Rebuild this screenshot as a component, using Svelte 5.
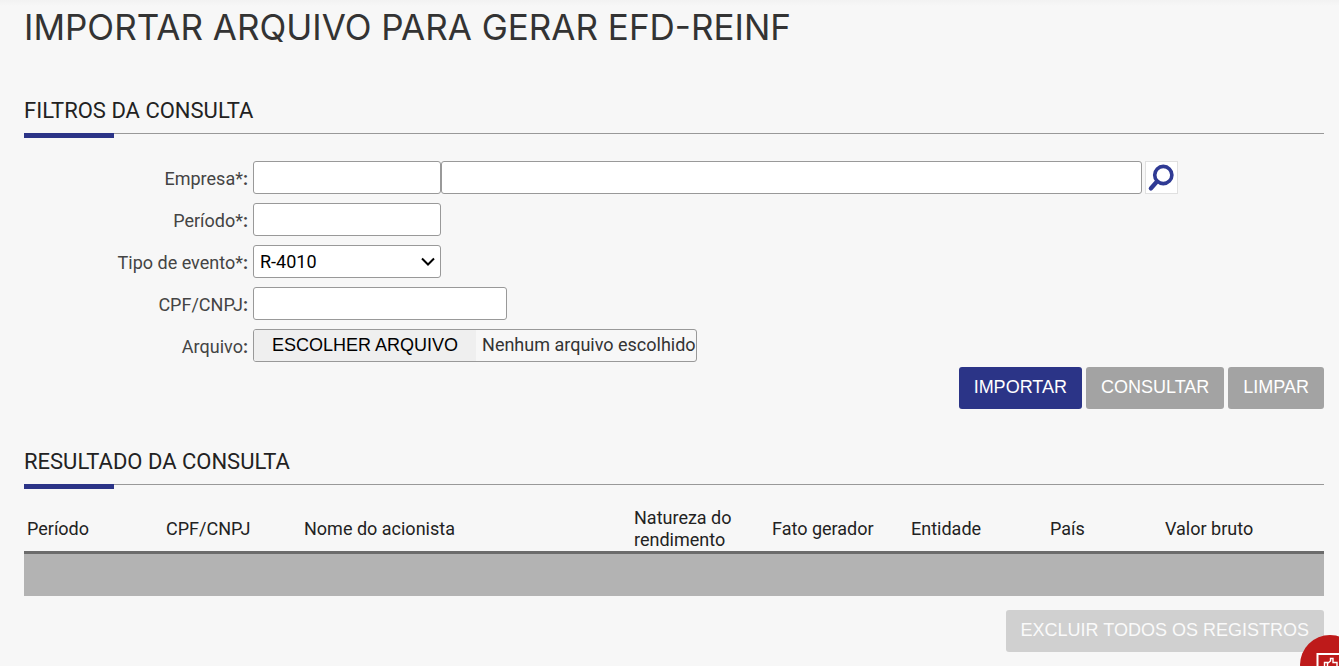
<script lang="ts">
    let empresaCodigo = "";
    let empresaNome = "";
    let periodo = "";
    let tipoEvento = "R-4010";
    let cpfCnpj = "";
    let files: FileList | undefined;

    const colunas = [
        { titulo: "Período", largura: 139 },
        { titulo: "CPF/CNPJ", largura: 138 },
        { titulo: "Nome do acionista", largura: 330 },
        { titulo: "Natureza do rendimento", largura: 138 },
        { titulo: "Fato gerador", largura: 139 },
        { titulo: "Entidade", largura: 139 },
        { titulo: "País", largura: 115 },
        { titulo: "Valor bruto", largura: 162 },
    ];
    const total = colunas.reduce((soma, c) => soma + c.largura, 0);

    $: nomeArquivo = files && files.length ? files[0].name : "Nenhum arquivo escolhido";
</script>

<main>
    <h1>IMPORTAR ARQUIVO PARA GERAR EFD-REINF</h1>

    <section class="filtros">
        <h2>FILTROS DA CONSULTA</h2>
        <form on:submit|preventDefault>
            <div class="linha">
                <label for="empresa">Empresa*<b>:</b></label>
                <div class="campos">
                    <input id="empresa" class="curto" type="text" bind:value={empresaCodigo} />
                    <input class="longo" type="text" aria-label="Nome da empresa" bind:value={empresaNome} />
                    <button type="button" class="lupa" aria-label="Pesquisar empresa">
                        <svg viewBox="0 0 31 31" width="31" height="31">
                            <circle cx="17.3" cy="13" r="8.6" fill="none" stroke="#2f3a94" stroke-width="3.6" />
                            <path d="M11 19.5 L4.8 26.5" stroke="#2f3a94" stroke-width="4.2" stroke-linecap="round" />
                        </svg>
                    </button>
                </div>
            </div>
            <div class="linha">
                <label for="periodo">Período*<b>:</b></label>
                <input id="periodo" class="curto" type="text" bind:value={periodo} />
            </div>
            <div class="linha">
                <label for="tipo">Tipo de evento*<b>:</b></label>
                <div class="selecao curto">
                    <select id="tipo" bind:value={tipoEvento}>
                        <option>R-4010</option>
                    </select>
                    <svg viewBox="0 0 14 9" width="14" height="9">
                        <path d="M1 1.5 L7 7.5 L13 1.5" fill="none" stroke="#000" stroke-width="2" />
                    </svg>
                </div>
            </div>
            <div class="linha">
                <label for="cpf">CPF/CNPJ<b>:</b></label>
                <input id="cpf" class="medio" type="text" bind:value={cpfCnpj} />
            </div>
            <div class="linha">
                <label for="arquivo">Arquivo<b>:</b></label>
                <div class="arquivo">
                    <input id="arquivo" type="file" bind:files />
                    <span class="escolher">ESCOLHER ARQUIVO</span>
                    <span class="nome">{nomeArquivo}</span>
                </div>
            </div>
            <div class="acoes">
                <button type="submit" class="botao primario">IMPORTAR</button>
                <button type="button" class="botao">CONSULTAR</button>
                <button type="reset" class="botao">LIMPAR</button>
            </div>
        </form>
    </section>

    <section class="resultado">
        <h2>RESULTADO DA CONSULTA</h2>
        <table>
            <thead>
                <tr>
                    {#each colunas as coluna}
                        <th style:width="{(coluna.largura / total) * 100}%">{coluna.titulo}</th>
                    {/each}
                </tr>
            </thead>
            <tbody>
                <tr><td colspan={colunas.length}></td></tr>
            </tbody>
        </table>
        <div class="acoes rodape">
            <button type="button" class="botao" disabled>EXCLUIR TODOS OS REGISTROS</button>
        </div>
    </section>
</main>

<button type="button" class="feedback" aria-label="Feedback">
    <svg viewBox="0 0 60 60" width="60" height="60" fill="none" stroke="#fff" stroke-width="2">
        <path d="M17.5 19 H43 V41 H30 L24 46 V41 H17.5 Z" />
        <path d="M24.5 27.5 H27.5 V35 H24.5 Z M27.5 28.5 L30.5 26 V23.5 H33 V27.5 H37 V35 H27.5" stroke-width="1.4" />
    </svg>
</button>

<style>
    :global(body) {
        background: #f7f7f7;
        overflow: hidden;
    }

    main {
        padding: 6px 15px 14px 24px;
        font-family: Roboto, "Liberation Sans", sans-serif;
        font-size: 18px;
        line-height: 22px;
        color: #222;
        background: linear-gradient(#f2f2f2, #f7f7f7 6px);
    }

    h1 {
        margin: 0;
        font-family: Inter, sans-serif;
        font-size: 35px;
        font-weight: 400;
        line-height: 42px;
        color: #333;
    }

    h2 {
        position: relative;
        margin: 0;
        padding-bottom: 9px;
        border-bottom: 1px solid #999;
        font-size: 22px;
        font-weight: 400;
        line-height: 26px;
    }

    /* faixa azul sobre a linha do título */
    h2::after {
        content: "";
        position: absolute;
        left: 0;
        top: 100%;
        width: 90px;
        height: 5px;
        background: #2b3487;
    }

    .filtros {
        margin-top: 50px;
    }

    form {
        padding-top: 27px;
    }

    .linha {
        display: flex;
        gap: 5px;
        height: 33px;
        margin-bottom: 9px;
    }

    .linha > label {
        flex: 0 0 224px;
        line-height: 35px;
        text-align: right;
        color: #444;
    }

    .campos {
        display: flex;
        flex: 1;
    }

    input,
    select,
    .arquivo {
        box-sizing: border-box;
        height: 33px;
        margin: 0;
        padding: 0 6px;
        border: 1px solid #999;
        border-radius: 3px;
        background: #fff;
        font: inherit;
        color: #000;
    }

    .selecao {
        position: relative;
    }

    .selecao svg {
        position: absolute;
        right: 6px;
        top: 12px;
        pointer-events: none;
    }

    select {
        width: 100%;
        appearance: none;
    }

    .curto {
        width: 188px;
    }

    .medio {
        width: 254px;
    }

    .longo {
        flex: 0 1 701px;
        min-width: 0;
    }

    .lupa {
        box-sizing: border-box;
        width: 33px;
        height: 33px;
        margin-left: 3px;
        padding: 0;
        border: 1px solid #e0e0e0;
        background: #fff;
    }

    .lupa svg {
        display: block;
    }

    .arquivo {
        position: relative;
        display: flex;
        width: 444px;
        padding: 0;
        overflow: hidden;
        background: none;
        line-height: 30px;
        white-space: nowrap;
    }

    .arquivo input {
        position: absolute;
        inset: 0;
        width: 100%;
        opacity: 0;
    }

    .escolher {
        padding: 0 18px;
        background: #efefef;
        font-family: "Liberation Sans", Arial, sans-serif;
    }

    .nome {
        padding-left: 6px;
        color: #333;
    }

    .acoes {
        display: flex;
        justify-content: flex-end;
        gap: 4px;
        margin-top: -4px;
    }

    .botao {
        height: 42px;
        padding: 0 15px 2px;
        border: 0;
        border-radius: 3px;
        background: #a3a3a3;
        font-family: "Liberation Sans", Arial, sans-serif;
        font-size: 18px;
        color: #fff;
    }

    .primario {
        background: #2b3487;
    }

    .botao:disabled {
        background: #d0d0d0;
        color: #fafafa;
    }

    .resultado {
        margin-top: 40px;
    }

    table {
        width: 100%;
        margin-top: 22px;
        border-collapse: collapse;
        table-layout: fixed;
    }

    th {
        box-sizing: border-box;
        height: 45px;
        padding: 0 3px;
        border-bottom: 3px solid #6b6b6b;
        font-weight: 400;
        text-align: left;
    }

    td {
        height: 42px;
        padding: 0;
        background: #b3b3b3;
    }

    .rodape {
        margin-top: 14px;
    }

    .feedback {
        position: fixed;
        right: -21px;
        bottom: -29px;
        width: 60px;
        height: 60px;
        padding: 0;
        border: 0;
        border-radius: 50%;
        background: #be1a1a;
    }
</style>
